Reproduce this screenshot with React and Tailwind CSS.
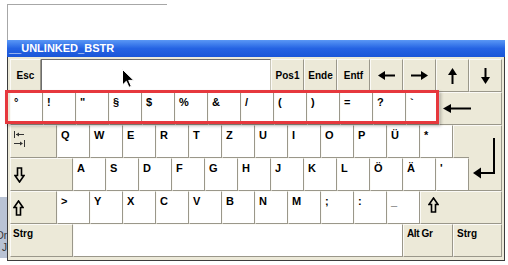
import React from 'react'

const KEY =
  'h-[33px] shrink-0 box-border border border-t-[#fbfaf6] border-l-[#fbfaf6] border-r-[#9a978a] border-b-[#9a978a]'

const ROW2 = ['°', '!', '"', '§', '$', '%', '&', '/', '(', ')', '=', '?', '`']
const ROW3 = ['Q', 'W', 'E', 'R', 'T', 'Z', 'U', 'I', 'O', 'P', 'Ü', '*']
const ROW4 = ['A', 'S', 'D', 'F', 'G', 'H', 'J', 'K', 'L', 'Ö', 'Ä', "'"]
const ROW5 = ['>', 'Y', 'X', 'C', 'V', 'B', 'N', 'M', ';', ':', '_']

function CharKey({ label }) {
  return (
    <div className={`${KEY} w-[33px] bg-white pl-[3px] pt-[4px] text-[11px] font-bold leading-none text-black`}>
      {label}
    </div>
  )
}

function FnKey({ className = '', children }) {
  return (
    <div
      className={`${KEY} ${className} bg-[#ece9d8] flex items-center justify-center text-[10px] font-bold leading-none text-black`}
    >
      {children}
    </div>
  )
}

function ArrowH({ flip = false }) {
  return (
    <svg width="17" height="9" viewBox="0 0 17 9" className={flip ? 'scale-x-[-1]' : ''}>
      <polygon points="0,4.5 7,0 7,9" fill="#000" />
      <rect x="6" y="3.5" width="11" height="2" fill="#000" />
    </svg>
  )
}

function ArrowV({ flip = false }) {
  return (
    <svg width="9" height="16" viewBox="0 0 9 16" className={flip ? 'scale-y-[-1]' : ''}>
      <polygon points="4.5,0 0,7 9,7" fill="#000" />
      <rect x="3.5" y="6" width="2" height="10" fill="#000" />
    </svg>
  )
}

function ShiftArrow({ down = false }) {
  return (
    <svg width="11" height="16" viewBox="0 0 11 16" className={down ? 'scale-y-[-1]' : ''}>
      <polygon
        points="5.5,1 10,7.5 7.5,7.5 7.5,15 3.5,15 3.5,7.5 1,7.5"
        fill="none"
        stroke="#000"
        strokeWidth="1.6"
        strokeLinejoin="miter"
      />
    </svg>
  )
}

function TabGlyph() {
  return (
    <svg width="13" height="19" viewBox="0 0 13 19">
      <rect x="1" y="1" width="1" height="7" fill="#333" />
      <rect x="3" y="4" width="8" height="1" fill="#333" />
      <polygon points="3,4.5 6,2.5 6,6.5" fill="#333" />
      <rect x="1" y="13" width="8" height="1" fill="#333" />
      <polygon points="10,13.5 7,11.5 7,15.5" fill="#333" />
      <rect x="11" y="10" width="1" height="7" fill="#333" />
    </svg>
  )
}

export default function App() {
  return (
    <div className="relative w-[508px] h-[265px] bg-white overflow-hidden font-['Liberation_Sans',Arial,sans-serif]">
      {/* frame of the field above */}
      <div className="h-[40px] pl-[7px] pt-[4px]">
        <div className="w-[160px] h-[36px] border-t border-l border-[#a7a7a7]" />
      </div>

      <div className="flex">
        {/* sliver of a window behind */}
        <div className="w-[7px] shrink-0">
          <div className="mt-[157px] h-[61px] bg-[#b9c3d4] overflow-hidden flex flex-col items-end text-[10px] leading-none text-[#333]">
            <span className="mt-[34px]">Or</span>
            <span className="mt-[2px]">J</span>
          </div>
        </div>

        <div className="w-[498px] shrink-0">
          <div className="h-[17px] bg-gradient-to-b from-[#5a97f5] via-[#2563e3] to-[#1a55d8] pl-[2px] flex items-center text-[11px] font-bold text-white leading-none">
            __UNLINKED_BSTR
          </div>

          <div className="bg-[#ece9d8] border-l border-r border-b border-[#3c3c3c] px-[2px] pt-[2px] pb-[3px]">
            {/* row 1 */}
            <div className="flex">
              <FnKey className="w-[31px]">Esc</FnKey>
              <div className="w-[230px] h-[33px] shrink-0 bg-white border border-t-[#6d6d6d] border-l-[#6d6d6d] border-r-[#c9c6b8] border-b-[#ece9d8]" />
              <FnKey className="w-[33px]">Pos1</FnKey>
              <FnKey className="w-[33px]">Ende</FnKey>
              <FnKey className="w-[33px]">Entf</FnKey>
              <FnKey className="w-[33px]">
                <ArrowH />
              </FnKey>
              <FnKey className="w-[33px]">
                <ArrowH flip />
              </FnKey>
              <FnKey className="w-[33px]">
                <ArrowV />
              </FnKey>
              <FnKey className="w-[33px]">
                <ArrowV flip />
              </FnKey>
            </div>

            {/* row 2 */}
            <div className="flex">
              {ROW2.map((k) => (
                <CharKey key={k} label={k} />
              ))}
              <FnKey className="w-[63px] !justify-start pl-[3px]">
                <svg width="28" height="9" viewBox="0 0 28 9">
                  <polygon points="0,4.5 8,0 8,9" fill="#000" />
                  <rect x="7" y="3.5" width="21" height="2" fill="#000" />
                </svg>
              </FnKey>
            </div>

            {/* rows 3 and 4 with the enter key */}
            <div className="flex">
              <div className="w-[459px] shrink-0">
                <div className="flex">
                  <div className={`${KEY} w-[47px] bg-[#ece9d8] pl-[2px] pt-[4px]`}>
                    <TabGlyph />
                  </div>
                  {ROW3.map((k) => (
                    <CharKey key={k} label={k} />
                  ))}
                  <div className="w-[16px] h-[33px] shrink-0 bg-[#ece9d8] border-t border-l border-b border-t-[#fbfaf6] border-l-[#fbfaf6] border-b-[#9a978a]" />
                </div>
                <div className="flex">
                  <div className={`${KEY} w-[63px] bg-[#ece9d8] flex items-center pl-[3px]`}>
                    <ShiftArrow down />
                  </div>
                  {ROW4.map((k) => (
                    <CharKey key={k} label={k} />
                  ))}
                </div>
              </div>
              <div className="relative w-[33px] h-[66px] shrink-0 bg-[#ece9d8] border-t border-r border-b border-t-[#fbfaf6] border-r-[#9a978a] border-b-[#9a978a]">
                <svg
                  width="33"
                  height="66"
                  viewBox="0 0 33 66"
                  className="absolute left-0 top-[-1px] overflow-visible"
                >
                  <rect x="24" y="13" width="2" height="36" fill="#000" />
                  <rect x="10" y="47" width="16" height="2" fill="#000" />
                  <polygon points="4,48 12,42.5 12,53.5" fill="#000" />
                </svg>
              </div>
            </div>

            {/* row 5 */}
            <div className="flex">
              <div className={`${KEY} w-[47px] bg-[#ece9d8] flex items-center pl-[2px]`}>
                <ShiftArrow />
              </div>
              {ROW5.map((k) => (
                <CharKey key={k} label={k} />
              ))}
              <div className={`${KEY} w-[82px] bg-[#ece9d8] pl-[7px] pt-[5px]`}>
                <ShiftArrow />
              </div>
            </div>

            {/* row 6 */}
            <div className="flex">
              <div className={`${KEY} w-[63px] bg-[#ece9d8] pl-[2px] pt-[4px] text-[10px] font-bold leading-none`}>
                Strg
              </div>
              <div className={`${KEY} w-[330px] bg-white`} />
              <div className={`${KEY} w-[50px] bg-[#ece9d8] pl-[3px] pt-[4px] text-[10px] font-bold leading-none tracking-[-0.4px]`}>
                Alt Gr
              </div>
              <div className={`${KEY} w-[49px] bg-[#ece9d8] pl-[3px] pt-[4px] text-[10px] font-bold leading-none`}>
                Strg
              </div>
            </div>
          </div>
        </div>
      </div>

      {/* highlight around the digit row */}
      <div className="absolute left-[5px] top-[90px] w-[434px] h-[34px] border-[3px] border-[#e6383d] shadow-[2px_2px_3px_rgba(0,0,0,0.25)] pointer-events-none" />

      {/* mouse pointer */}
      <svg width="13" height="19" viewBox="0 0 13 19" className="absolute left-[122px] top-[69px]">
        <polygon
          points="0.5,0.5 0.5,16 4.3,12.3 7,18.3 9.3,17.3 6.7,11.4 11.8,11.4"
          fill="#000"
          stroke="#fff"
          strokeWidth="1"
        />
      </svg>
    </div>
  )
}
